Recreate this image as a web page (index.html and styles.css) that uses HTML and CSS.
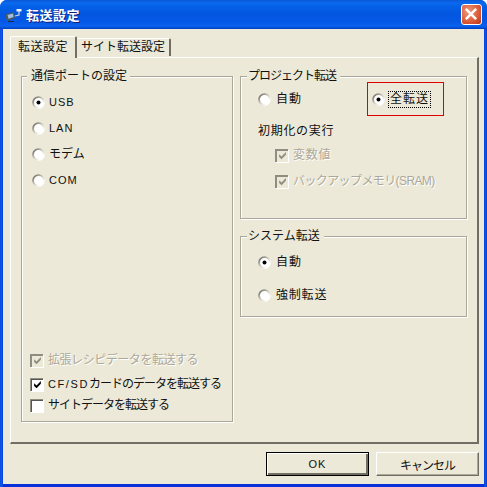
FILE: index.html
```html
<!DOCTYPE html>
<html lang="ja">
<head>
<meta charset="utf-8">
<title>転送設定</title>
<link rel="stylesheet" href="styles.css">
</head>
<body>
<svg class="defs" width="0" height="0" aria-hidden="true">
  <defs>
    <linearGradient id="ring" x1="0" y1="0" x2="1" y2="1">
      <stop offset="0.15" stop-color="#85837a"/>
      <stop offset="0.5" stop-color="#d6d3c4"/>
      <stop offset="0.8" stop-color="#ffffff"/>
    </linearGradient>
    <symbol id="radio" viewBox="0 0 13 13">
      <circle cx="6.5" cy="6.5" r="5.4" fill="#fff" stroke="url(#ring)" stroke-width="1.8"/>
    </symbol>
    <symbol id="radio-on" viewBox="0 0 13 13">
      <circle cx="6.5" cy="6.5" r="5.4" fill="#fff" stroke="url(#ring)" stroke-width="1.8"/>
      <circle cx="6.5" cy="6.5" r="2" fill="#000"/>
    </symbol>
    <symbol id="tick" viewBox="0 0 13 13">
      <path d="M2.500 5l2.900 2.800L10.500 2.500v3.200L5.400 11 2.500 8.200z"/>
    </symbol>
  </defs>
</svg>
<div class="window">
  <header class="titlebar">
    <svg class="app-icon" viewBox="0 0 18 14" width="18" height="14">
      <path d="M1 6l8-2 1 6-7 3-2-2z" fill="#46586e"/>
      <path d="M2.500 7l5.500-1.500.6 3.500-5 1.800z" fill="#9fc0dc"/>
      <path d="M10 8l4-1V3" fill="none" stroke="#c9d6e4" stroke-width="1.200"/>
      <path d="M11.500 1h5v2.500h-5z" fill="#eef2f6"/>
      <path d="M3 13h6v1H3z" fill="#1c2c48"/>
    </svg>
    <span class="title-text">転送設定</span>
    <span class="spacer"></span>
    <button class="close" aria-label="閉じる">
      <svg viewBox="0 0 20 20" width="19" height="19"><path d="M5 5l9 9M14 5l-9 9" stroke="#fff" stroke-width="2.600" fill="none" stroke-linecap="square"/></svg>
    </button>
  </header>
  <div class="client">
    <nav class="tabs">
      <span class="tab active">転送設定</span>
      <span class="tab second">サイト転送設定</span>
    </nav>
    <main class="panel">
      <section class="group port-group">
        <h2 class="legend port-legend">通信ポートの設定</h2>
        <div class="radio-list">
          <label class="opt"><svg class="ctl"><use href="#radio-on"/></svg><span class="latin">USB</span></label>
          <label class="opt"><svg class="ctl"><use href="#radio"/></svg><span class="latin">LAN</span></label>
          <label class="opt"><svg class="ctl"><use href="#radio"/></svg><span>モデム</span></label>
          <label class="opt"><svg class="ctl"><use href="#radio"/></svg><span class="latin">COM</span></label>
        </div>
        <div class="check-list">
          <label class="opt check disabled first"><span class="box"><svg><use href="#tick"/></svg></span><span class="tight-s">拡張レシピデータを転送する</span></label>
          <label class="opt check"><span class="box"><svg><use href="#tick"/></svg></span><span class="latin-w">CF/SD</span><span class="tight">カードのデータを転送する</span></label>
          <label class="opt check"><span class="box"></span><span class="tight">サイトデータを転送する</span></label>
        </div>
      </section>
      <div class="right-col">
        <section class="group project-group">
          <h2 class="legend tight">プロジェクト転送</h2>
          <div class="project-row">
            <label class="opt"><svg class="ctl narrow"><use href="#radio"/></svg><span class="wide">自動</span></label>
            <div class="highlight">
              <label class="opt"><svg class="ctl focus-ctl"><use href="#radio-on"/></svg><span class="focus">全転送</span></label>
            </div>
          </div>
          <p class="sub">初期化の実行</p>
          <div class="sub-list">
            <label class="opt check disabled"><span class="box"><svg><use href="#tick"/></svg></span><span class="spaced">変数値</span></label>
            <label class="opt check disabled"><span class="box"><svg><use href="#tick"/></svg></span><span class="tight-m">バックアップメモリ(SRAM)</span></label>
          </div>
        </section>
        <section class="group system-group">
          <h2 class="legend">システム転送</h2>
          <label class="opt"><svg class="ctl narrow"><use href="#radio-on"/></svg><span class="wide">自動</span></label>
          <label class="opt"><svg class="ctl narrow"><use href="#radio"/></svg><span class="spaced">強制転送</span></label>
        </section>
      </div>
    </main>
    <footer class="actions">
      <button class="btn default">OK</button>
      <button class="btn">キャンセル</button>
    </footer>
  </div>
</div>
</body>
</html>
```
FILE: styles.css
```css
* { box-sizing: border-box; }
html, body { margin: 0; padding: 0; }
body {
  width: 487px;
  height: 487px;
  overflow: hidden;
  background: #ffffff;
  font-family: "Liberation Sans", "Noto Sans CJK JP", sans-serif;
  font-size: 12px;
  color: #111;
}
.defs { position: absolute; }
.window {
  width: 487px;
  height: 487px;
  display: flex;
  flex-direction: column;
  background: linear-gradient(to right, #0a4fd8 0, #0a5cf0 2px, #0831d9 3px, #0831d9 484px, #0a5cf0 485px, #0a3fc0 487px);
  border-radius: 7px 7px 0 0;
}
.titlebar {
  height: 29px;
  flex: none;
  display: flex;
  align-items: center;
  padding: 0 5px 0 5px;
  border-radius: 7px 7px 0 0;
  background: linear-gradient(to bottom, #0a58d8 0, #0a6af0 3px, #0461e8 6px, #0356e0 14px, #0458e6 22px, #0a62ee 26px, #0040c0 29px);
}
.app-icon { flex: none; }
.title-text {
  margin-left: 3px;
  color: #fff;
  font-size: 13px;
  font-weight: 700;
  letter-spacing: 0.5px;
  text-shadow: 1px 1px 0 #0f1f80;
}
.spacer { flex: 1; }
.close {
  width: 21px;
  height: 21px;
  padding: 0;
  display: flex;
  align-items: center;
  justify-content: center;
  border: 1px solid #fff;
  border-radius: 3px;
  background: radial-gradient(circle at 35% 35%, #ee9a7c 0, #dd5f3c 55%, #b8341a 100%);
}
.client {
  flex: 1;
  margin: 0 3px 3px 3px;
  padding: 7px 5px 0 7px;
  background: #ece9d8;
  display: flex;
  flex-direction: column;
}
.tabs {
  display: flex;
  align-items: flex-end;
  height: 21px;
  flex: none;
  position: relative;
  z-index: 1;
}
.tab {
  height: 18px;
  padding: 0 0 0 4px;
  line-height: 17px;
  background: #ece9d8;
  border-top: 1px solid #fff;
  border-right: 2px solid #716f64;
  margin-bottom: 1px;
  border-radius: 2px 2px 0 0;
  white-space: nowrap;
}
.tab.second { width: 94px; }
.tab.active {
  height: 22px;
  width: 67px;
  margin-bottom: -1px;
  padding: 0 0 0 7px;
  line-height: 20px;
  letter-spacing: 0.5px;
  border-left: 1px solid #fff;
}
.panel {
  flex: none;
  height: 387px;
  width: 469px;
  display: flex;
  gap: 7px;
  padding: 18px 10px 20px 10px;
  border-top: 1px solid #fff;
  border-left: 1px solid #fff;
  border-right: 2px solid #716f64;
  border-bottom: 2px solid #716f64;
}
.group {
  position: relative;
  border: 1px solid #aca899;
  box-shadow: 1px 1px 0 #fff, inset 1px 1px 0 #fff;
}
.legend {
  position: absolute;
  top: -8px;
  left: 6px;
  margin: 0;
  padding: 0 4px 0 1px;
  background: #ece9d8;
  font-size: 12px;
  font-weight: 400;
  line-height: 15px;
}
.port-legend { left: 5px; padding: 0 3px 0 4px; }
.opt {
  display: flex;
  align-items: center;
  height: 14px;
  line-height: 14px;
  white-space: nowrap;
}
.ctl { width: 13px; height: 13px; flex: none; margin-right: 4px; }
.ctl.narrow { margin-right: 5px; }
.latin { letter-spacing: 1px; font-size: 11px; }
.latin-w { letter-spacing: 1.6px; font-size: 11px; }
.wide { letter-spacing: 1px; }
.spaced { letter-spacing: 0.8px; }
.tight { letter-spacing: -1px; }
.tight-s { letter-spacing: -0.45px; }
.tight-m { letter-spacing: -0.6px; }
.box {
  width: 13px;
  height: 13px;
  flex: none;
  margin-right: 5px;
  background: #fff;
  border-top: 1px solid #8f8d80;
  border-left: 1px solid #8f8d80;
  box-shadow: inset 1px 1px 0 #555, 1px 1px 0 #fff;
  display: flex;
}
.box svg { width: 11px; height: 11px; fill: #000; margin: 0 0 0 1px; }
.disabled { color: #aca899; text-shadow: 1px 1px 0 #fff; }
.disabled .box { background: #ece9d8; box-shadow: inset 1px 1px 0 #8f8d80, 1px 1px 0 #fff; }
.disabled .box svg { fill: #8f8d80; }
.port-group {
  width: 212px;
  flex: none;
  display: flex;
  flex-direction: column;
  justify-content: space-between;
  padding: 18px 0 9px 10px;
}
.radio-list { display: flex; flex-direction: column; gap: 12px; }
.check-list { display: flex; flex-direction: column; margin-left: -2px; }
.check-list .opt { margin-top: 7px; }
.check-list .opt.first { margin-bottom: 3px; }
.right-col {
  flex: 1;
  display: flex;
  flex-direction: column;
  gap: 17px;
}
.project-group { height: 143px; flex: none; padding: 5px 0 0 17px; }
.project-row {
  display: grid;
  grid-template-columns: 109px 77px;
  align-items: center;
}
.highlight {
  height: 34px;
  border: 1px solid #e00000;
  display: flex;
  align-items: center;
  padding-left: 4px;
}
.ctl.focus-ctl { margin-right: 3px; }
.focus {
  outline: 1px dotted #000;
  outline-offset: -1px;
  letter-spacing: 1px;
  padding: 0 2px;
  height: 17px;
  line-height: 17px;
}
.sub { margin: 8px 0 0 0; line-height: 14px; height: 14px; letter-spacing: 0.7px; }
.sub-list { display: flex; flex-direction: column; gap: 12px; padding: 10px 0 0 17px; }
.system-group { height: 81px; flex: none; padding: 18px 0 0 17px; }
.system-group .opt + .opt { margin-top: 19px; }
.actions {
  flex: 1;
  display: flex;
  justify-content: flex-end;
  gap: 7px;
  padding: 8px 0 0 0;
  align-items: flex-start;
}
.btn {
  width: 103px;
  height: 24px;
  padding: 0;
  background: #ece9d8;
  border: 1px solid;
  border-color: #fff #716f64 #716f64 #fff;
  box-shadow: inset -1px -1px 0 #aca899;
  font-family: inherit;
  font-size: 12px;
  letter-spacing: -1px;
  color: #111;
}
.btn.default {
  border-color: #000;
  box-shadow: inset 1px 1px 0 #fff, inset -2px -2px 0 #716f64;
  font-size: 11px;
  letter-spacing: 1px;
}
```
